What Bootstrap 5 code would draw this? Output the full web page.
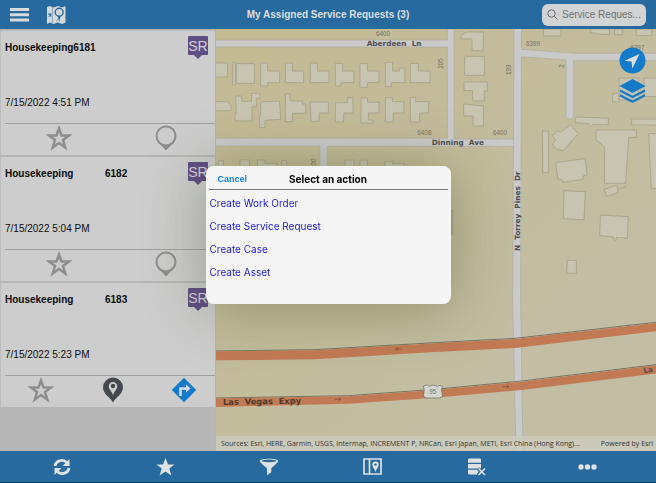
<!DOCTYPE html>
<html lang="en">
<head>
<meta charset="utf-8">
<meta name="viewport" content="width=device-width, initial-scale=1">
<title>My Assigned Service Requests</title>
<link href="https://cdn.jsdelivr.net/npm/bootstrap@5.3.0/dist/css/bootstrap.min.css" rel="stylesheet">
<style>
  body { font-family: "Liberation Sans", Arial, sans-serif; font-size: 10px; line-height: 12px; color: #0c0c0c; background: #b6b6b6; }
  .bar { background: #266a9f; }
  .top-bar { height: 29px; flex: none; }
  .app-title { font-size: 10px; font-weight: 700; color: #dcdfe2; }
  .bar button, .card-tools button, .map-tool { border: 0; padding: 0; background: none; display: flex; align-items: center; justify-content: center; }
  svg { display: block; }
  .top-side { flex: 1 1 0; padding: 0 10px; }
  .find-box { width: 104px; height: 22px; border-radius: 6px; background: #d2d3d4; padding: 0 4px 0 5px; color: #6f7173; }
  .find-box input { border: 0; background: none; outline: 0; padding: 0; min-width: 0; width: 100%; font-size: 10px; color: #6f7173; }
  .find-box input::placeholder { color: #6f7173; opacity: 1; }
  .requests { width: 216px; flex: none; background: #b6b6b6; padding-top: 2px; gap: 2px; border-right: 1px solid #b3b3b8; overflow: hidden; }
  .request { background: #cdcdcd; border-left: 1px solid #bdbdbd; }
  .request-body { height: 92px; padding: 11px 7px 14px 4px; }
  .request-name { min-width: 100px; }
  .request-name.tight { min-width: 68px; }
  .request h2 { font-size: 10px; line-height: 12px; font-weight: 700; margin: 0; }
  .kind { position: absolute; top: 5px; right: 7px; width: 20px; height: 19px; border-radius: 1px; background: #5f4e85; color: #d3d0da; font-size: 14px; line-height: 20px; text-align: center; }
  .kind::after { content: ""; position: absolute; left: 6px; top: 19px; border: 4px solid transparent; border-top-color: #5f4e85; border-bottom: 0; }
  .card-tools { border-top: 1px solid #a0a0a0; margin: 0 -5px 0 4px; height: 32px; padding-bottom: 4px; color: #8e8e8e; }
  .card-tools button { flex: 1 1 0; color: inherit; }
  .map-pane { min-width: 0; background: #c3bd9f; }
  .map-art { position: absolute; inset: 0; width: 100%; height: 100%; }
  .map-tools { position: absolute; top: 18px; right: 10px; gap: 4px; }
  .credits { position: absolute; left: 0; right: 0; bottom: 0; height: 15px; padding: 0 3px 0 5px; background: rgba(205,204,192,.75); color: #333; font-family: "Open Sans", sans-serif; font-size: 7px; line-height: 15px; white-space: nowrap; }
  .bottom-bar { height: 32px; flex: none; padding: 0 10px; color: #dfe1e2; border-bottom: 1px solid #0d3a6c; }
  .bottom-bar button { flex: 104 1 0; color: inherit; }
  .bottom-bar button:last-child { flex-grow: 118; }
  .sheet-layer { position: fixed; inset: 0; padding-bottom: 14px; }
  .sheet { width: 245px; height: 138px; border-radius: 8px; background: #f5f5f5; box-shadow: 0 4px 60px rgba(50,65,20,.36); padding: 4px 3px 0; }
  .sheet-head { height: 20px; border-bottom: 1px solid #777; display: grid; grid-template-columns: 1fr auto 1fr; align-items: center; }
  .sheet-head h1 { font-family: Inter, sans-serif; font-size: 10px; line-height: 14px; font-weight: 700; margin: 0; color: #000; }
  .sheet-head button { border: 0; background: none; padding: 0 0 0 9px; text-align: left; font-weight: 700; font-size: 9px; color: #1583e2; }
  .sheet nav { padding: 2px 0 0 1px; }
  .sheet a { display: block; font-family: Inter, sans-serif; font-size: 10px; line-height: 23px; color: #1b1bd8; text-decoration: none; }
  .lot { fill: #c7c4b1; stroke: #aba68c; stroke-width: 3; }
  .lane { fill: #cacaca; stroke: #aeac9f; stroke-width: 2; }
  .highway { fill: #c27a54; }
  .street { font: 700 22px "DejaVu Sans", sans-serif; fill: #505050; }
  .street .major { font-size: 25px; fill: #4e3a30; }
  .house-no { font: 19px "Liberation Sans", sans-serif; fill: #77735f; }
</style>
<script src="https://cdn.jsdelivr.net/npm/bootstrap@5.3.0/dist/js/bootstrap.bundle.min.js"></script>
</head>
<body class="vh-100 d-flex flex-column overflow-hidden">

<svg width="0" height="0" class="position-absolute" aria-hidden="true">
  <symbol id="star-line" viewBox="0 0 26 26"><path d="M13 3.500 15.500 10.500H23L17 15 19.300 22.500 13 18 6.700 22.500 9 15 3 10.500H10.500Z" fill="none" stroke="currentColor" stroke-width="2.500"/></symbol>
  <symbol id="pin-line" viewBox="0 0 24 26"><circle cx="12" cy="11" r="9.500" fill="none" stroke="currentColor" stroke-width="2"/><path d="M5 18Q12 22 19 18L12 25.500Z" fill="currentColor"/></symbol>
</svg>

<header class="bar top-bar d-flex align-items-center">
  <div class="top-side d-flex align-items-center gap-3">
    <button type="button" aria-label="Menu"><svg width="19" height="14" viewBox="0 0 19 14" fill="#d8dadb"><path d="M0 0h19v3H0zM0 5.300h19v3H0zM0 10.600h19v3H0z"/></svg></button>
    <button type="button" aria-label="Map"><svg width="22" height="20" viewBox="0 0 22 20"><path d="M2 2 5 1 8.500 2.500 13 1 17 2.500 20.500 1V17.500L17 19 13 17.500 8.500 19 5 17.500 2 19Z" fill="#d5d8da"/><path d="M7.500 2V18.500M11 17.500 14 12" stroke="#8faabe" fill="none"/><circle cx="14.200" cy="7.200" r="4" fill="#d5d8da" stroke="#266a9f" stroke-width="1.400"/><path d="M12.800 11h2.800L14.200 17Z" fill="#266a9f"/><path d="m3.500 8.500 2.800 3M6.300 8.500l-2.800 3" stroke="#266a9f" stroke-width="1.100"/></svg></button>
  </div>
  <span class="app-title">My Assigned Service Requests (3)</span>
  <div class="top-side d-flex justify-content-end">
    <label class="find-box d-flex align-items-center gap-1">
      <svg class="flex-shrink-0" width="11" height="11" viewBox="0 0 11 11" fill="none" stroke="currentColor"><circle cx="4.500" cy="4.500" r="3.700"/><path d="m7.200 7.200 3.300 3.300"/></svg>
      <input type="text" placeholder="Service Reques..." aria-label="Search service requests">
    </label>
  </div>
</header>

<main class="d-flex flex-fill overflow-hidden">
  <section class="requests d-flex flex-column">
    <article class="request position-relative">
      <div class="request-body d-flex flex-column justify-content-between">
        <div class="d-flex"><h2 class="request-name tight">Housekeeping</h2><strong>6181</strong></div>
        <time>7/15/2022 4:51 PM</time>
      </div>
      <span class="kind">SR</span>
      <div class="card-tools d-flex">
        <button type="button" aria-label="Favorite"><svg width="26" height="26"><use href="#star-line"/></svg></button>
        <button type="button" aria-label="Locate"><svg width="24" height="26"><use href="#pin-line"/></svg></button>
      </div>
    </article>
    <article class="request position-relative">
      <div class="request-body d-flex flex-column justify-content-between">
        <div class="d-flex"><h2 class="request-name">Housekeeping</h2><strong>6182</strong></div>
        <time>7/15/2022 5:04 PM</time>
      </div>
      <span class="kind">SR</span>
      <div class="card-tools d-flex">
        <button type="button" aria-label="Favorite"><svg width="26" height="26"><use href="#star-line"/></svg></button>
        <button type="button" aria-label="Locate"><svg width="24" height="26"><use href="#pin-line"/></svg></button>
      </div>
    </article>
    <article class="request position-relative">
      <div class="request-body d-flex flex-column justify-content-between">
        <div class="d-flex"><h2 class="request-name">Housekeeping</h2><strong>6183</strong></div>
        <time>7/15/2022 5:23 PM</time>
      </div>
      <span class="kind">SR</span>
      <div class="card-tools d-flex">
        <button type="button" aria-label="Favorite"><svg width="26" height="26"><use href="#star-line"/></svg></button>
        <button type="button" aria-label="Locate"><svg width="22" height="26" viewBox="0 0 22 26"><path d="M11 25.500C8 20 1 17 1 10.500a10 10 0 0 1 20 0C21 17 14 20 11 25.500Z" fill="#45484d"/><path d="M11 18C9.500 14 6.800 12.500 6.800 9.300a4.200 4.200 0 0 1 8.400 0C15.200 12.500 12.500 14 11 18Z" fill="#cdcdcd"/><circle cx="11" cy="9" r="2.200" fill="#45484d"/></svg></button>
        <button type="button" aria-label="Directions"><svg width="26" height="26" viewBox="0 0 26 26"><path d="M13 .8 25.200 13 13 25.200.8 13Z" fill="#147bcb"/><path d="M9.500 19V11.500H16" fill="none" stroke="#d5dde3" stroke-width="2.600"/><path d="m15 7.500 4.500 4L15 15.500Z" fill="#d5dde3"/></svg></button>
      </div>
    </article>
  </section>

  <section class="map-pane flex-fill position-relative overflow-hidden" aria-label="Map">
    <svg class="map-art" viewBox="3 87 1320 1266" preserveAspectRatio="xMidYMid slice">
      <defs><linearGradient id="ground" x2=".7" y2=".7"><stop offset="0" stop-color="#c4bb93"/><stop offset=".45" stop-color="#c3bb99"/><stop offset="1" stop-color="#c3bea3"/></linearGradient></defs>
      <rect x="0" y="80" width="1330" height="1280" fill="url(#ground)"/>
      <g class="lane">
        <path d="M0 120H697V87H717V417H900V439H337V600H315V438H0V415H697V141H0Z"/>
        <path d="M897 80H919V148L1080 160H1330V182H1076V346a11 11 0 0 1-23 0V180L919 170 917 900 924 1360H903L893 900Z"/>
      </g>
      <g class="lot">
        <path d="M0 189H38V231H0ZM53 187H61V255H53ZM64 191H118V250H64ZM137 189H158V213H194V248H158V258H137ZM211 189H232V213H266V248H211ZM286 189H307V213H342V248H286ZM361 190H383V213H417V248H378V258H361ZM435 191H457V213H492V248H457V262H435ZM511 187H533V213H554V204H570V248H529V260H511ZM586 190H610V213H645V248H586Z"/>
        <path d="M0 305H38L48 316V332H0ZM62 288H80V304H110V280H135V295H124V320H111V363H60V340H64ZM137 306 194 303 197 358 150 361V383H134V346H137ZM211 282H225V303H262V312H272V340H233V365H211ZM286 306H340V339H312V364H288ZM361 308H397V293H414V339H386V366H361ZM438 294H458V307H492V339H460V360H475V369H438ZM511 293H532V305H567V339H535V366H511ZM586 292H602V305H641V339H614V366H586Z"/>
        <path d="M10 482H25V550H10ZM75 480H104V550H75ZM128 480H150V490H186V550H128ZM200 482H215V550H200ZM390 480H417V550H390ZM435 480H457V550H435ZM510 484H532V490H568V550H510Z"/>
        <path d="M738 105 756 96H805V152H771V117H738ZM749 169H808V226H749ZM747 246H817V273H808V303H773V272H747ZM746 312 806 318V378H774V348H746ZM985 87H1038V108H985ZM1127 87H1183V103H1155L1127 98ZM1198 87H1222V104H1198ZM1264 87H1310V107H1264Z"/>
        <path d="M1212 234H1270V300H1212ZM1287 234H1330V290H1287ZM1193 280H1212V306H1193ZM1081 351 1180 354V374H1134L1126 381 1120 371 1081 368ZM1250 357H1330V375H1250ZM1143 390H1264V412H1241L1232 550H1168V440L1143 420ZM1301 401H1330V565H1309ZM982 393H1001V518H983ZM1012 407 1029 392 1036 397 1066 374 1090 401 1045 452 1022 447 1012 431 1022 420Z"/>
        <path d="M1022 488 1110 476 1117 524 1104 528V538L1043 547V540L1028 537ZM1047 572 1111 575 1107 660 1045 656ZM1167 568 1205 556 1210 577 1175 590ZM1212 567 1232 560M1156 645 1240 650 1237 715 1203 712V723H1196V711L1154 707ZM1057 781H1084V820H1055ZM710 628H713V705H710Z"/>
      </g>
      <g fill="none" stroke="#747665" stroke-width="3"><path d="M0 1053 300 1049 660 1028 900 1015 1330 966M0 1194 400 1187 660 1168 920 1143 1330 1093"/></g>
      <g class="highway">
        <path d="M0 1054 300 1051 660 1030 900 1017 1330 968V993L900 1044 660 1056 300 1078 0 1081Z"/>
        <path d="M0 1195 400 1189 660 1170 920 1145 1330 1095V1120L920 1170 660 1193 400 1211 0 1221Z"/>
      </g>
      <g fill="none" stroke="#7d4d38" stroke-width="2"><path d="M561 1047H542m7-5-7 5 7 5M359 1198H378m-7-5 7 5-7 5M863 1160H882m-7-5 7 5-7 5"/></g>
      <path d="m625 1158 10-3 8 4 12-4 12 4 8-3 8 4-4 9 4 20-9 5H634l-9-5 3-18Z" fill="#d5d5d0" stroke="#666" stroke-width="2"/>
      <text x="643" y="1183" class="house-no">95</text>
      <g class="street">
        <text x="455" y="138">Aberdeen&#160; Ln</text>
        <text x="650" y="434">Dinning&#160; Ave</text>
        <text transform="translate(914 753) rotate(-90)">N&#160; Torrey&#160; Pines&#160; Dr</text>
        <text class="major" transform="translate(24 1215) rotate(-1)">Las&#160; Vegas&#160; Expy</text>
        <text transform="translate(1286 1119) rotate(-7)">La</text>
      </g>
      <g class="house-no">
        <text x="483" y="108">6400</text><text x="607" y="405">6408</text><text x="933" y="138">6399</text><text x="1246" y="149">6397</text><text x="834" y="405">6400</text>
        <text transform="translate(684 206) rotate(-90)">205</text><text transform="translate(887 225) rotate(-90)">199</text><text transform="translate(1046 203) rotate(-90)">2</text><text transform="translate(303 507) rotate(-90)">200</text>
      </g>
    </svg>
    <div class="map-tools d-flex flex-column">
      <button class="map-tool" type="button" aria-label="My location"><svg width="27" height="27" viewBox="0 0 27 27"><circle cx="13.500" cy="13.500" r="13" fill="#147bcb"/><path d="M20.500 7 5.500 13.800 12.500 14.500 13.300 21.500Z" fill="#d8dfe4"/></svg></button>
      <button class="map-tool" type="button" aria-label="Layers"><svg width="27" height="26" viewBox="0 0 27 26"><path d="M13.500 1 26.500 8 13.500 15 .5 8Z" fill="#147bcb"/><path d="m1 12.500 12.500 6.500L26 12.500M1 17.200l12.500 6.500L26 17.200" fill="none" stroke="#147bcb" stroke-width="2.300"/></svg></button>
    </div>
    <div class="credits d-flex justify-content-between">
      <span class="text-truncate">Sources: Esri, HERE, Garmin, USGS, Intermap, INCREMENT P, NRCan, Esri Japan, METI, Esri China (Hong Kong)...</span>
      <span>Powered by Esri</span>
    </div>
  </section>
</main>

<footer class="bar bottom-bar d-flex">
  <button type="button" aria-label="Refresh"><svg width="20" height="18" viewBox="0 0 20 18"><path d="M3 8A6.800 6.200 0 0 1 14.500 4.200M17 10A6.800 6.200 0 0 1 5.500 13.800" fill="none" stroke="currentColor" stroke-width="2.800"/><path d="M17.500 1V8H10.500ZM2.500 17V10H9.500Z" fill="currentColor"/></svg></button>
  <button type="button" aria-label="Favorites"><svg width="19" height="18" viewBox="0 0 19 18"><path d="M9.500 0 12 6.500H18.500L13.300 10.600 15.400 17.500 9.500 13.400 3.600 17.500 5.700 10.600.5 6.500H7Z" fill="currentColor"/></svg></button>
  <button type="button" aria-label="Filter"><svg width="20" height="18" viewBox="0 0 20 18"><path d="M.8 3C.8 0 19.200 0 19.200 3 19 5 13 9 12.300 10.500V14L8 17.500V10.500C7 9 1 5 .8 3Z" fill="currentColor"/><ellipse cx="10" cy="2.900" rx="7.400" ry="1.300" fill="#266a9f"/></svg></button>
  <button type="button" aria-label="Map view"><svg width="19" height="17" viewBox="0 0 19 17"><path d="M1 1H18V16H1ZM6.500 1V16" fill="none" stroke="currentColor" stroke-width="1.700"/><path d="M12.500 14C11.800 11 9.300 9.500 9.300 6.800a3.200 3.200 0 0 1 6.400 0C15.700 9.500 13.200 11 12.500 14Z" fill="currentColor"/><circle cx="12.500" cy="6.600" r="1.200" fill="#266a9f"/></svg></button>
  <button type="button" aria-label="Clear data"><svg width="19" height="18" viewBox="0 0 19 18"><path d="M1 1.500Q1 .5 2 .5H13q1 0 1 1V4.800H1ZM1 6H14V10.500H1ZM1 11.800H10.500L12 14 10.500 16.500H2q-1 0-1-1Z" fill="currentColor"/><path d="m11 10.500 7 6.500M18 10.500 11 17" stroke="#266a9f" stroke-width="3.500"/><path d="m11.500 10.500 6.500 6.500M18 10.500 11.500 17" stroke="currentColor" stroke-width="1.700"/></svg></button>
  <button type="button" aria-label="More"><svg width="19" height="6" viewBox="0 0 19 6" fill="currentColor"><circle cx="3" cy="3" r="2.700"/><circle cx="9.500" cy="3" r="2.700"/><circle cx="16" cy="3" r="2.700"/></svg></button>
</footer>

<div class="sheet-layer d-flex align-items-center justify-content-center">
  <div class="sheet" role="dialog" aria-labelledby="sheet-title">
    <div class="sheet-head">
      <button type="button">Cancel</button>
      <h1 id="sheet-title">Select an action</h1>
    </div>
    <nav aria-label="Actions">
      <a href="#">Create Work Order</a>
      <a href="#">Create Service Request</a>
      <a href="#">Create Case</a>
      <a href="#">Create Asset</a>
    </nav>
  </div>
</div>
</body>
</html>
